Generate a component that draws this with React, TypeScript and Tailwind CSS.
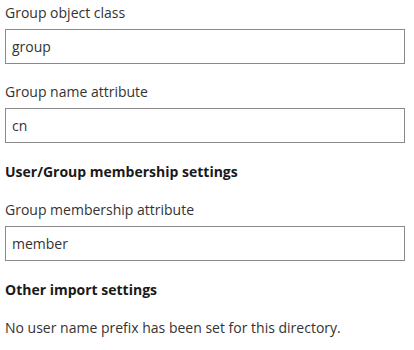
import React from 'react';

const Field: React.FC<{ label: string; value: string }> = ({ label, value }) => (
  <div className="flex flex-col">
    <label className="text-[14px] leading-[20px] mb-[6px]">{label}</label>
    <div className="h-[35px] w-[400px] border border-[#8a8a8a] bg-white flex items-center px-[6px] text-[14px]">
      {value}
    </div>
  </div>
);

export default function App() {
  return (
    <div
      className="w-[414px] h-[350px] bg-white text-[#333333] pl-[5px] pt-[3px] overflow-hidden"
      style={{ fontFamily: '"Open Sans", "Liberation Sans", sans-serif' }}
    >
      <Field label="Group object class" value="group" />
      <div className="h-[18px]" />
      <Field label="Group name attribute" value="cn" />
      <h3 className="text-[14px] leading-[20px] font-bold mt-[19px] text-[#1a1a1a]">User/Group membership settings</h3>
      <div className="h-[18px]" />
      <Field label="Group membership attribute" value="member" />
      <h3 className="text-[14px] leading-[20px] font-bold mt-[19px] text-[#1a1a1a]">Other import settings</h3>
      <p className="text-[14px] leading-[20px] mt-[18px]">No user name prefix has been set for this directory.</p>
    </div>
  );
}
